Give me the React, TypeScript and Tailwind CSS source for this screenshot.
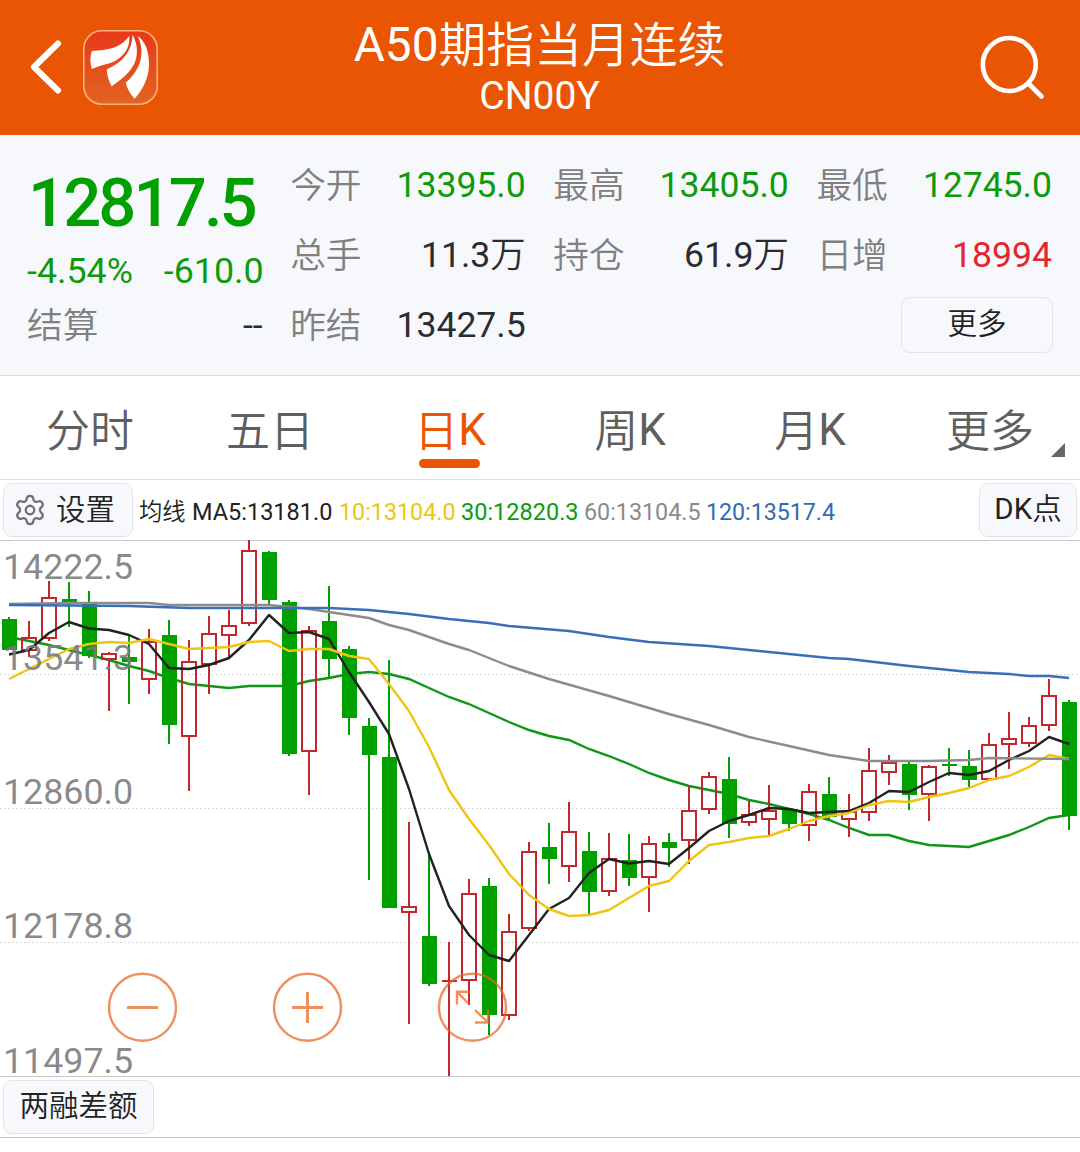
import React from "react";
import { Settings } from "lucide-react";

type Candle = [up: 0 | 1, top: number, bottom: number, high: number, low: number];

const GREEN = "#00a000";
const RED = "#c1272d";

const candles: Candle[] = [
  [0, 619, 650, 617, 650], [1, 638, 650, 621, 657], [1, 598, 638, 581, 641], [0, 599, 602, 582, 627],
  [0, 604, 656, 591, 658], [1, 654, 659, 652, 711], [0, 657, 662, 634, 704], [1, 642, 679, 629, 694],
  [0, 635, 725, 620, 744], [1, 662, 736, 640, 791], [1, 634, 664, 616, 694], [1, 626, 635, 610, 658],
  [1, 551, 623, 540, 626], [0, 552, 600, 551, 606], [0, 602, 754, 600, 756], [1, 631, 751, 626, 795],
  [0, 621, 659, 586, 678], [0, 649, 718, 646, 735], [0, 726, 755, 718, 880], [0, 757, 908, 660, 908],
  [1, 907, 912, 822, 1024], [0, 936, 984, 852, 986], [1, 981, 981, 942, 1076], [1, 894, 980, 879, 1005],
  [0, 886, 1015, 878, 1035], [1, 932, 1015, 914, 1020], [1, 852, 928, 842, 931], [0, 847, 859, 823, 884],
  [1, 832, 866, 802, 882], [0, 851, 892, 832, 914], [1, 859, 891, 833, 896], [0, 860, 878, 834, 886],
  [1, 844, 877, 836, 912], [0, 842, 848, 833, 867], [1, 811, 840, 786, 864], [1, 777, 809, 772, 814],
  [0, 779, 824, 757, 838], [1, 815, 822, 801, 826], [1, 811, 819, 785, 836], [0, 809, 824, 809, 831],
  [1, 792, 825, 784, 841], [0, 794, 817, 777, 819], [1, 812, 819, 794, 837], [1, 771, 812, 748, 821],
  [1, 763, 772, 755, 785], [0, 764, 795, 762, 810], [1, 767, 794, 765, 821], [0, 764, 766, 748, 776],
  [0, 766, 780, 750, 787], [1, 745, 779, 733, 780], [1, 739, 744, 712, 769], [1, 726, 743, 717, 747],
  [1, 696, 725, 679, 731], [0, 702, 816, 700, 830],
];

const ma5 =
  "9,654.5 29,650 49,633 69,622 89,628.5 109,630 129,635 149,644 169,668 189,669 209,665 229,658 249,640 269,615 289,633 309,632 329,639 349,672 369,702 389,734 409,789 429,854 449,906 469,935 489,955 509,961 529,935 549,909 569,898 589,873 609,859 629,863.5 649,861 669,864 689,848 709,831 729,821 749,815 769,808 789,809 809,813 829,812 849,811 869,803 889,791 909,792 929,782 949,773 969,775 989,771 1009,760 1029,751 1049,737 1069,744";
const ma10 =
  "9,679 29,669 49,659 69,649 89,644 109,642 129,643 149,639 169,644 189,649 209,648 229,647 249,642 269,641 289,651 309,649 329,649 349,656 369,659 389,684 409,711 429,747 449,790 469,819 489,845 509,874 529,895 549,909 569,916 589,915 609,910 629,898 649,886 669,881 689,861 709,845 729,842 749,838 769,836 789,829 809,821 829,816 849,813 869,805 889,801 909,802 929,797 949,793 969,788 989,780 1009,776 1029,767 1049,755 1069,759";
const ma30 =
  "9,637 29,641 49,645 69,650 89,655 109,660 129,666 149,671 169,678 189,684 209,686 229,688 249,686 289,686 309,681 329,678 349,674 369,672 389,674 409,679 429,688 449,697 469,704 489,713 509,722 529,730 549,736 569,740 589,749 609,756 629,764 649,773 669,780 689,786 709,790 729,794 749,800 769,804 789,809 809,814 829,820 849,828 869,835 889,835 909,841 929,845 969,847 989,841 1009,835 1029,827 1049,818 1069,815";
const ma60 =
  "9,604 69,603 149,603 169,605 269,605 289,607 309,609 329,612 369,618 389,625 409,630 449,644 469,650 489,658 509,666 549,679 609,696 669,714 709,725 749,737 789,746 829,755 869,761 929,761 969,760 989,758 1069,759";
const ma120 =
  "9,605 129,606 189,608 329,608 369,610 409,614 449,619 489,623 509,626 569,631 609,637 649,642 709,646 769,652 829,658 849,659 909,666 969,672 1009,674 1029,676 1049,676 1069,678";

const axisLabels: [string, number][] = [
  ["14222.5", 579], ["13541.3", 670], ["12860.0", 804], ["12178.8", 938], ["11497.5", 1073],
];

function Logo() {
  return (
    <svg className="ml-[21px] mt-[30px] size-[75px]" viewBox="83 30 75 75">
      <defs>
        <linearGradient id="logoFill" x1="0" y1="0" x2="0" y2="1">
          <stop offset="0" stopColor="#e8381a" />
          <stop offset="1" stopColor="#e26420" />
        </linearGradient>
      </defs>
      <rect x="83.8" y="30.8" width="73.4" height="73.4" rx="18" fill="url(#logoFill)" stroke="#fab07c" strokeWidth="1.6" />
      <g fill="#fff">
        <path d="M129.2 36C121 48 108 50 91.8 51Q89 59 91.8 69C106 63 113 64 120 57.5C127 51.5 130 45 129.2 36Z" />
        <path d="M132.6 35C132 50 124 62 106.8 69.3Q107 78 111.7 86.3C120 80 130 74 135 62C138.5 53 137 42 132.6 35Z" />
        <path d="M137.7 36C144 49 144 67 125.7 82.7Q128 92 134.7 98.7C143 89 149 78 149 64C149 51 145 41 137.7 36Z" />
      </g>
    </svg>
  );
}

function Header() {
  return (
    <header className="flex h-[135px] shrink-0 items-start bg-[#ea5504] text-white">
      <svg className="ml-[28px] mt-[37px] h-[60px] w-[34px]" viewBox="28 37 34 60" fill="none" stroke="#fff" strokeWidth="6" strokeLinecap="round" strokeLinejoin="round">
        <path d="M58 43.5L34 67L58 90.5" />
      </svg>
      <Logo />
      <div className="flex flex-1 flex-col items-center pr-[56px]">
        <h1 className="mt-[17px] flex h-[56px] items-center text-[47.8px] leading-[56px] font-normal whitespace-nowrap">
          <span>A50</span>
          <span className="relative top-[1px] font-[350]">期指当月连续</span>
        </h1>
        <p className="h-[46px] text-[39px] leading-[46px]">CN00Y</p>
      </div>
      <svg className="mt-[32px] mr-[33px] size-[70px]" viewBox="977 32 70 70" fill="none" stroke="#fff" strokeWidth="4.6" strokeLinecap="round">
        <circle cx="1009.3" cy="64.5" r="26.5" />
        <path d="M1029 84L1041.5 96.5" />
      </svg>
    </header>
  );
}

function Stat({ label, value, tone = "text-[#2b2c30]", unit }: { label: string; value?: string; tone?: string; unit?: string }) {
  return (
    <div className="flex h-[70px] items-center justify-between text-[35.6px] leading-[70px]">
      <span className="-ml-[1px] pt-[2px] text-[35.7px] font-[350] text-[#808080]">{label}</span>
      <span className={tone}>
        {value}
        {unit && <span className="text-[35.4px] font-[350]">{unit}</span>}
      </span>
    </div>
  );
}

function Quote() {
  return (
    <section className="grid h-[241px] shrink-0 grid-cols-4 gap-x-[28.5px] border-b border-[#d9dade] bg-[#f7f8fc] px-7 pt-[15px]">
      <div className="flex flex-col">
        <div className="mt-[18px] h-[70px] text-[67px] leading-[70px] font-medium tracking-[-2.9px] text-[#00a000]">12817.5</div>
        <div className="-mx-[1px] flex h-[37px] items-center justify-between pt-[31px] text-[35.8px] text-[#0d9b0d]">
          <span>-4.54%</span>
          <span>-610.0</span>
        </div>
        <div className="mt-[15px]">
          <Stat label="结算" value="--" />
        </div>
      </div>
      <div>
        <Stat label="今开" value="13395.0" tone="text-[#0d9b0d]" />
        <Stat label="总手" value="11.3" unit="万" />
        <Stat label="昨结" value="13427.5" />
      </div>
      <div>
        <Stat label="最高" value="13405.0" tone="text-[#0d9b0d]" />
        <Stat label="持仓" value="61.9" unit="万" />
      </div>
      <div>
        <Stat label="最低" value="12745.0" tone="text-[#0d9b0d]" />
        <Stat label="日增" value="18994" tone="text-[#e2262d]" />
        <button className="-mr-[1px] mt-[7px] ml-auto flex h-[56px] w-[152px] items-center justify-center rounded-[9px] border-[1.5px] border-[#e2e3e8] pb-[1px] text-[29.5px] font-[350] text-[#222]">更多</button>
      </div>
    </section>
  );
}

const tabs: [string, string][] = [["分时", ""], ["五日", ""], ["日", "K"], ["周", "K"], ["月", "K"], ["更多", ""]];

function Tabs() {
  return (
    <nav className="grid h-[104px] shrink-0 grid-cols-6 border-b border-[#dcdcdc] bg-white text-[44px] text-[#5f5f5f]">
      {tabs.map(([cjk, latin], i) => (
        <div key={cjk} className={"relative flex h-[108px] items-center justify-center " + (i === 2 ? "text-[#ea5504]" : "")}>
          <span className="pt-[4px] font-[350]">{cjk}</span>
          <span>{latin}</span>
          {i === 2 && <span className="absolute top-[83px] left-[59px] h-[9px] w-[61px] rounded-full bg-[#ea5504]" />}
          {i === 5 && (
            <svg className="absolute top-[67px] left-[151px] size-[14px]" viewBox="0 0 14 14">
              <path d="M14 0V14H0Z" fill="#666" />
            </svg>
          )}
        </div>
      ))}
    </nav>
  );
}

function Toolbar() {
  return (
    <div className="flex h-[61px] shrink-0 items-start border-b border-[#c8c8c8] bg-white px-[3px] pt-[3px] whitespace-nowrap">
      <button className="flex h-[54px] w-[130px] items-center rounded-[9px] border-[1.5px] border-[#e2e3e8] bg-[#f7f8fc] pl-[9px] text-[29.5px] font-[350] text-[#222]">
        <Settings className="mr-[9px] size-[34px] text-[#707070]" strokeWidth={1.6} />
        设置
      </button>
      <div className="mt-[12px] ml-[6px] flex h-[34px] items-center text-[23.5px] leading-[34px]">
        <span className="w-[53px] text-[23.3px] font-[350] text-[#222]">均线</span>
        <span className="w-[147px] text-[#222]">MA5:13181.0</span>
        <span className="w-[122px] text-[23.3px] text-[#f0c414]">10:13104.0</span>
        <span className="w-[123px] text-[#0d9b0d]">30:12820.3</span>
        <span className="w-[122px] text-[23.3px] text-[#8a8a8a]">60:13104.5</span>
        <span className="text-[23.2px] text-[#2f6cb3]">120:13517.4</span>
      </div>
      <button className="ml-auto flex h-[54px] w-[98px] items-center justify-center rounded-[9px] border-[1.5px] border-[#e2e3e8] bg-[#f7f8fc] pb-[1px] text-[29.5px] text-[#222]">
        DK<span className="font-[350]">点</span>
      </button>
    </div>
  );
}

function Chart() {
  return (
    <svg className="relative block h-[535px] w-full shrink-0 overflow-visible" viewBox="0 541 1080 535">
      <g stroke="#cfcfcf" strokeWidth="1" strokeDasharray="1.5 2.5">
        <path d="M0 674.5H1080M0 808.5H1080M0 942.5H1080" />
      </g>
      <polyline points={ma30} fill="none" stroke="#0f9618" strokeWidth="2.4" />
      {candles.map(([up, top, bottom, high, low], i) => {
        const x = 9 + i * 20;
        return up ? (
          <g key={i} stroke={RED} strokeWidth="2" fill="none">
            <path d={`M${x} ${high}V${top}M${x} ${bottom}V${low}`} />
            {top === bottom ? <path d={`M${x - 7} ${top}H${x + 8}`} /> : <rect x={x - 7} y={top} width="14" height={bottom - top} />}
          </g>
        ) : (
          <g key={i} fill={GREEN}>
            <rect x={x - 1} y={high} width="2" height={low - high} />
            <rect x={x - 7} y={top} width="15" height={bottom - top} />
          </g>
        );
      })}
      <g fill="none" strokeWidth="2.4" strokeLinejoin="round">
        <polyline points={ma5} stroke="#222" />
        <polyline points={ma10} stroke="#f0c414" />
        <polyline points={ma60} stroke="#8c8c8c" />
        <polyline points={ma120} stroke="#3a6fb7" />
      </g>
      <g fill="#7a7a7a" fillOpacity="0.9" fontSize="35.8">
        {axisLabels.map(([text, y]) => (
          <text key={text} x="3" y={y}>{text}</text>
        ))}
      </g>
      <g fill="none" stroke="#ea6420" strokeOpacity="0.72" strokeWidth="2.4">
        <circle cx="142.5" cy="1007.3" r="33.5" />
        <circle cx="307.5" cy="1007.3" r="33.5" />
        <circle cx="472.5" cy="1007.3" r="33.5" />
        <path d="M127 1007.5H158M292 1007.5H323M307.5 992V1023" strokeWidth="3" />
        <path d="M470 991.8H457V1004.5M457 991.8L469 1004M475 1022.5H488V1009.5M475 1010L488 1022.5" />
      </g>
    </svg>
  );
}

export default function App() {
  return (
    <main className="flex h-[1152px] w-[1080px] flex-col overflow-hidden bg-white font-[Roboto,'Noto_Sans_CJK_SC',sans-serif]">
      <Header />
      <Quote />
      <Tabs />
      <Toolbar />
      <Chart />
      <footer className="flex h-[62px] shrink-0 items-start border-y border-[#c8c8c8] px-[3px] pt-[3px]">
        <button className="flex h-[54px] w-[151px] items-center justify-center rounded-[9px] border-[1.5px] border-[#e2e3e8] bg-[#f7f8fc] pb-[1px] text-[29.5px] font-[350] text-[#222]">两融差额</button>
      </footer>
    </main>
  );
}
